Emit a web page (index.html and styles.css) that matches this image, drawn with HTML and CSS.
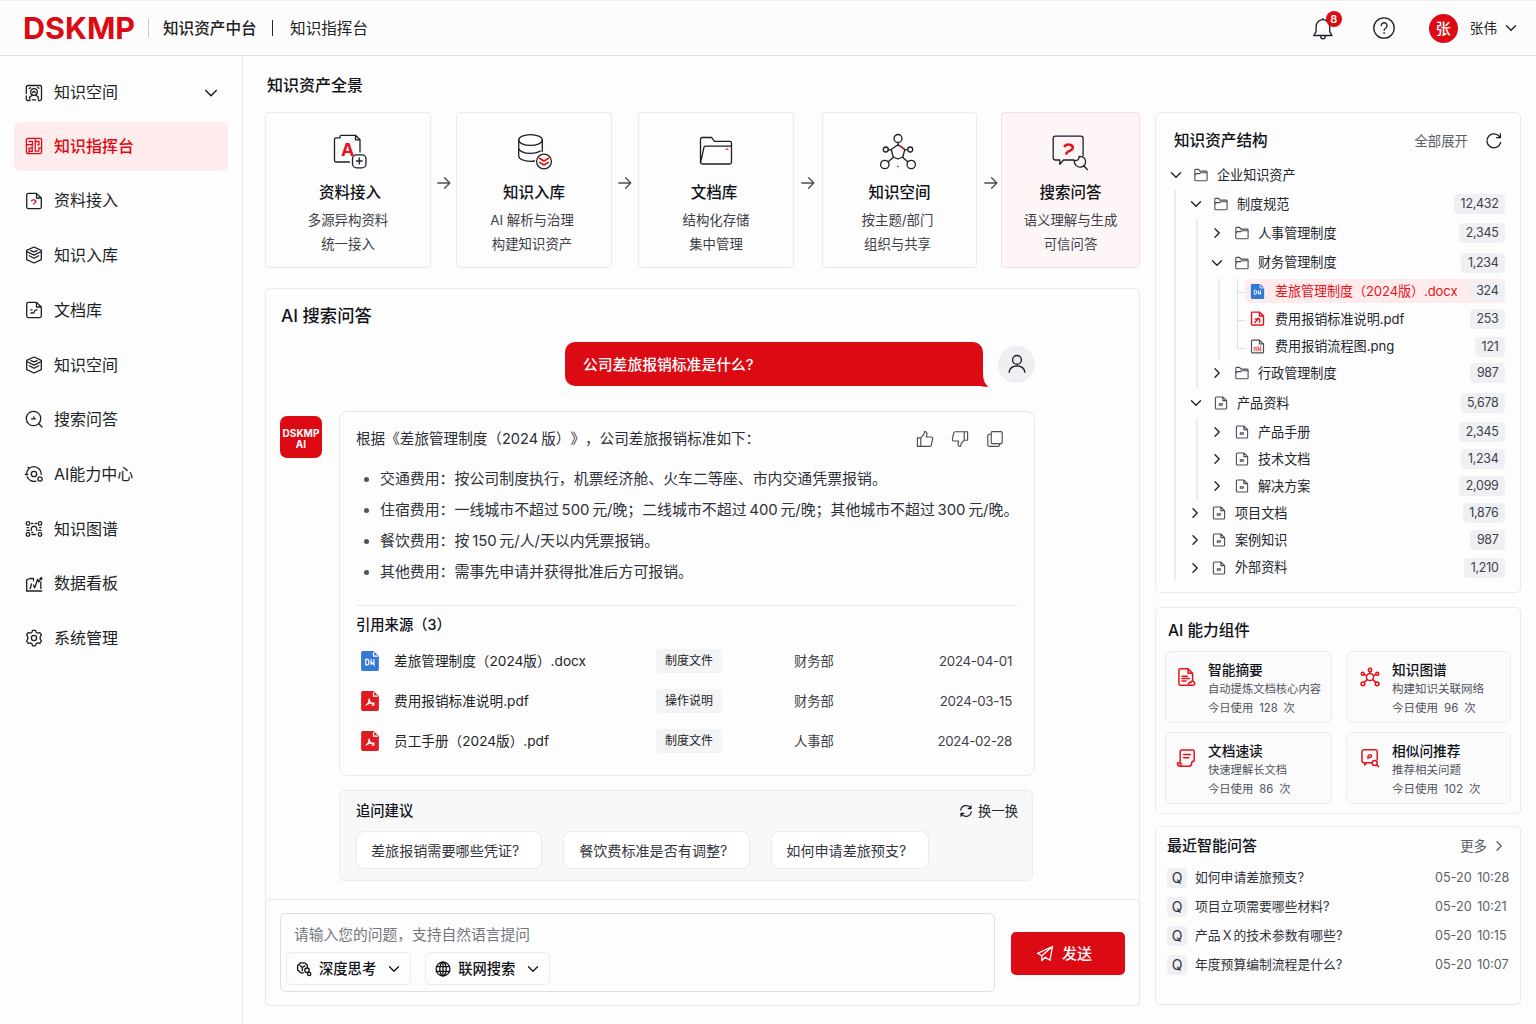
FILE: index.html
```html
<!DOCTYPE html>
<html lang="zh-CN">
<head>
    <meta charset="UTF-8">
    <meta name="viewport" content="width=device-width, initial-scale=1.0">
    <title>DSKMP 知识指挥台</title>
    <link rel="stylesheet" href="styles.css">
</head>
<body>
    <!-- Icon sprite -->
    <svg class="sprite" aria-hidden="true">
        <symbol id="i-down" viewBox="0 0 12 12"><path d="M1.500 3.800 6 8.300l4.500-4.500"/></symbol>
        <symbol id="i-right" viewBox="0 0 12 12"><path d="M4 1.800 8.200 6 4 10.200"/></symbol>
        <symbol id="i-arrow" viewBox="0 0 14 14"><path d="M.8 7h12M7.600 1.800 12.800 7l-5.200 5.200"/></symbol>
        <symbol id="i-bell" viewBox="0 0 24 24"><path d="M2.800 19.500h18.200l-2.300-3.800V10.500a6.800 6.800 0 0 0-13.600 0v5.200zM12 3.600V2.400M9.700 20.500a2.300 2.300 0 0 0 4.600 0"/></symbol>
        <symbol id="i-help" viewBox="0 0 24 24"><circle cx="12" cy="12" r="10.200"/><path d="M9.200 9.600a2.900 2.900 0 1 1 4.300 2.600c-1 .6-1.400 1.100-1.400 2.200"/><path d="M12.100 16.600v.9"/></symbol>
        <symbol id="i-space" viewBox="0 0 20 20"><path d="M6 17.500H3.800A1.500 1.500 0 0 1 2.300 16v-3M2.300 10.500V4a1.500 1.500 0 0 1 1.500-1.500H16A1.500 1.500 0 0 1 17.500 4v12a1.500 1.500 0 0 1-1.500 1.500h-1.500M5 5.500l1.500-.8M15 5.300l-1.400-.8"/><circle cx="10" cy="9" r="3.300"/><path d="M8.500 12 5.500 14.200l.3 1.800M11.500 12l3 2.200-.3 1.800M8.300 16.800h3.400M8.600 9.500 10 8.200l1.400 1.300"/></symbol>
        <symbol id="i-command" viewBox="0 0 20 20"><rect x="2.400" y="2.400" width="15.200" height="15.200" rx="1.500"/><path d="M5 5.500h3.500v3.200H2.800M11.200 2.800v12.400M11.200 5.500h3.800v3.300h-1.400M5 17v-4.800h3.200v3.200H5.500M8.200 9v3M14.800 11.800v3.200M11.200 15.200h2.300M14.800 11.800h2.500"/></symbol>
        <symbol id="i-docask" viewBox="0 0 20 20"><path d="M12.500 2.400H4.200a1.500 1.500 0 0 0-1.500 1.500v12.200a1.500 1.500 0 0 0 1.500 1.500h11.600a1.500 1.500 0 0 0 1.500-1.500V7zM12.500 2.400V7h4.800"/><path class="red" d="M7.400 9.800c1.200-1.400 4.800-1 4.600.6-.1 1.200-1.600 1-2.200 2.600"/></symbol>
        <symbol id="i-doc" viewBox="0 0 20 20"><path d="M12.500 2.400H4.200a1.500 1.500 0 0 0-1.500 1.500v12.200a1.500 1.500 0 0 0 1.500 1.500h11.600a1.500 1.500 0 0 0 1.500-1.500V7zM12.500 2.400V7h4.800M6.800 9.800h1.400M11 10.400l2-.6M7 13h2.600l1-1.800"/></symbol>
        <symbol id="i-box" viewBox="0 0 20 20"><path d="M10 2 17.300 5.300v9.300L10 18l-7.300-3.400V5.300zM2.700 6.500 10 10.200l7.300-3.700M5.300 10.700 10 13.300l4.700-2.600M6.800 5.600 10 6.900l3.200-1.300"/></symbol>
        <symbol id="i-search" viewBox="0 0 20 20"><circle cx="9.500" cy="9.500" r="7.200"/><path d="m14.800 14.800 3.200 3.200M7.500 9.800h4M9.800 7.800v2"/></symbol>
        <symbol id="i-center" viewBox="0 0 20 20"><path d="M12 17.200a7.400 7.400 0 0 1-8.800-4.400M2.600 10.700A7.400 7.400 0 0 1 10 2.600a7.400 7.400 0 0 1 7.200 7.800M1.400 10.500h2.400M5.500 4.200 4 3.200"/><circle cx="10" cy="10" r="2.700"/><circle cx="16" cy="15" r="2.100"/></symbol>
        <symbol id="i-graph" viewBox="0 0 20 20"><circle cx="4" cy="4.500" r="1.800"/><circle cx="16" cy="4.500" r="1.800"/><circle cx="4" cy="15.500" r="1.800"/><circle cx="16" cy="15.500" r="1.800"/><path d="M7.500 11.300a2.800 2.800 0 1 1 5 0M7.500 4.500h1.300M11.200 4.500h1.300M3 8.600h1.500M3 11.300h2.500M14.500 11.300H17M15.600 8.600H17M8 15.500h3.500M7.800 13.300h1"/></symbol>
        <symbol id="i-chart" viewBox="0 0 20 20"><path d="M2.500 17h15.200M2.700 17V5.800l3-1.300h3.800v2.200M6 14.500c1-1 1-3 1.300-4.500M9.500 11l1.200 2.700 3-8.400 1.100 2.600 2.700-4.400M16.800 8v6.500M16 4.500l1.500-1 .3 1.800"/></symbol>
        <symbol id="i-gear" viewBox="0 0 20 20"><path d="M8.600 2.300h2.800l.7 2 1.600.9 2.100-.6 1.600 2.300-1.200 1.800v2.500l1.200 1.900-1.600 2.300-2.100-.5-1.600.9-.7 2H8.600l-.7-2-1.600-.9-2.100.5-1.600-2.300 1.200-1.900V8.700L2.600 6.900l1.600-2.300 2.100.6 1.600-.9z"/><circle cx="10" cy="10" r="2.600"/></symbol>
        <symbol id="i-folder" viewBox="0 0 14 14"><path d="M.8 11.800V2.200a.8.800 0 0 1 .8-.8h3l1.300 1.700h6.400a.8.800 0 0 1 .8.800v8a.8.800 0 0 1-.8.8H1.600a.8.800 0 0 1-.8-.9zM.8 7.800l1.300-2.200h3.600l.8-.8h6.500"/></symbol>
        <symbol id="i-file" viewBox="0 0 14 14"><path d="M8.800 1H2.400a1 1 0 0 0-1 1v10a1 1 0 0 0 1 1h9.200a1 1 0 0 0 1-1V4.600zM8.800 1v3.600h3.800M5.300 9.300V7.800h3.200L8 9.200H5.300"/></symbol>
        <symbol id="i-word" viewBox="0 0 16 18"><path class="blue" d="M1.500 0h9.700L16 4.800v11.700a1.500 1.500 0 0 1-1.500 1.500h-13A1.500 1.500 0 0 1 0 16.500v-15A1.500 1.500 0 0 1 1.500 0z"/><path class="white" d="M11.200.8v3.900h4M4.200 12.500v-5h1.600c1.600 0 1.600 5 0 5zM9 12.500v-5M9 9.500l2.500 3v-5"/></symbol>
        <symbol id="i-pdf" viewBox="0 0 16 18"><path class="pdf" d="M1.500 0h9.700L16 4.800v11.700a1.500 1.500 0 0 1-1.500 1.500h-13A1.500 1.500 0 0 1 0 16.500v-15A1.500 1.500 0 0 1 1.500 0z"/><path class="white" d="M11.200.8v3.900h4M4.200 13c1.600-.8 3-3 3-6.200 0 2.400 1.600 4.400 4.200 4.600-2.200-.8-3.800-.4-5.400.2M9.400 12.800h2v-2.400"/></symbol>
        <symbol id="i-rfile" viewBox="0 0 14 14"><path d="M8.800 1H2.200a.8.800 0 0 0-.8.8v10.400a.8.800 0 0 0 .8.800h9.600a.8.800 0 0 0 .8-.8V4.600zM8.800 1v3.600h3.800M4.600 10.800l3.400-4M5 7.500h4M9 10.500V8.200"/></symbol>
        <symbol id="i-img" viewBox="0 0 14 14"><path class="dark" d="M8.800 1H2.200a.8.800 0 0 0-.8.8v10.400a.8.800 0 0 0 .8.800h9.600a.8.800 0 0 0 .8-.8V4.600zM8.800 1v3.600h3.800"/><path d="M4 11V8h1.800v3M7.500 11V6.500M7.500 8l2.500 3V6.500"/></symbol>
        <symbol id="i-refresh" viewBox="0 0 18 18"><path d="M15.700 10.400A7 7 0 1 1 14.900 5.200M15.400 1.800v3.900h-3.900"/></symbol>
        <symbol id="i-swap" viewBox="0 0 14 14"><path d="M1.800 6A5.300 5.300 0 0 1 11.600 4.200M12.200 8a5.300 5.300 0 0 1-9.800 1.800M12 1.800v2.800H9.200M2 12.200V9.400h2.800"/></symbol>
        <symbol id="i-up" viewBox="0 0 18 18"><path d="M1.400 7.800h3.400v8.500H1.400zM4.800 7.900l2.900-3.300.8-3c1.700-.3 2.600.9 2.400 2.500l-.5 2.900h4.900c.9 0 1.500.7 1.300 1.600l-1.300 6.500c-.2.700-.7 1.200-1.500 1.200H4.800"/></symbol>
        <symbol id="i-copy" viewBox="0 0 18 18"><rect x="5.200" y="1.600" width="11" height="12" rx="1.200"/><path d="M5.200 4.200H3a1.200 1.200 0 0 0-1.200 1.200v9.700a1.200 1.200 0 0 0 1.200 1.200h9.300a1.200 1.200 0 0 0 1.200-1.200v-1.500"/></symbol>
        <symbol id="i-user" viewBox="0 0 24 24"><circle cx="12" cy="7.500" r="4.800"/><path d="M3.400 21c.6-4.800 4-6.800 8.600-6.800s8 2 8.600 6.800"/></symbol>
        <symbol id="i-send" viewBox="0 0 18 18"><path d="M16.500 1.500 1.500 8.300l4.300 2.400zM16.500 1.500l-2.600 13.800-4.800-3M5.800 10.700v5l3.300-3.400"/></symbol>
        <symbol id="i-globe" viewBox="0 0 16 16"><circle cx="8" cy="8" r="6.900"/><ellipse cx="8" cy="8" rx="3.200" ry="6.900"/><path d="M8 1.100v13.800M1.400 5.600h13.200M1.400 10.400h13.200"/></symbol>
        <symbol id="i-think" viewBox="0 0 16 16"><path d="M7.600 11.800H4.800L1.600 9V4.600l3-2.800h4l2.800 2.500v2M4 4.500l2.300 2v3M6.300 6.500l2.500-1.800"/><circle cx="11" cy="9.200" r="2.200"/><circle cx="13.200" cy="13" r="1.700"/></symbol>
        <symbol id="i-sum" viewBox="0 0 20 20"><path d="M12 1.800H4.400a1.500 1.500 0 0 0-1.500 1.500v13.400a1.500 1.500 0 0 0 1.500 1.500h7.200M12 1.800l4.600 4.400v7M12 1.800v4.400h4.600M6 9.200h5.500M6 11.500h7.500M6 14h4"/><path d="M12.500 18.200h4.700a1.500 1.500 0 0 0 .8-2.800c0-1.700-2.700-1.900-3 0-2-.3-3.200 1.700-2.500 2.800z"/></symbol>
        <symbol id="i-net" viewBox="0 0 20 20"><circle cx="10" cy="10" r="3.600"/><circle cx="10" cy="2.900" r="1.700"/><circle cx="2.700" cy="6.800" r="1.500"/><circle cx="17.300" cy="6.800" r="1.500"/><circle cx="2.900" cy="16.800" r="1.900"/><circle cx="17.100" cy="16.800" r="1.900"/><path d="M10 4.600v1.800M4.200 7.500l2.400 1.200M15.800 7.500l-2.400 1.200M4.200 15.400l3.100-2.800M15.800 15.400l-3.100-2.800"/></symbol>
        <symbol id="i-read" viewBox="0 0 20 20"><path d="M4.200 12.800V3.500a1.500 1.500 0 0 1 1.500-1.500h11a1.500 1.500 0 0 1 1.500 1.500v9.600c-1.800 0-2.600.8-2.600 2.400s-1 2.700-2.400 2.700H4.400c-1.800 0-3-1.200-3-3.200h2.800c.8 0 1 .8.600 1.900M4.200 12.800v2.200M7.500 6.500h7M7.500 9.800h5.500"/></symbol>
        <symbol id="i-ask" viewBox="0 0 20 20"><path d="M6.500 14.700 4.800 17v-2.300H4a2 2 0 0 1-2-2v-9a2 2 0 0 1 2-2h11.200a2 2 0 0 1 2 2v8M6.500 14.700h5"/><path d="M8 10.600c-.3-2 .3-4 2-3.800 2.300.2 1.800 3-.6 2.600"/><circle cx="14.700" cy="15" r="2.500"/><path d="m16.600 16.800 2 1.800"/></symbol>
        <symbol id="s-import" viewBox="0 0 38 38"><path d="M9 4.800V3.500a1.200 1.200 0 0 1 1.200-1.200h14.300l4.500 4.500v12.200M24.500 2.300v4.500H29M9 4.800H5.200A1.700 1.700 0 0 0 3.500 6.500v20.800A1.700 1.700 0 0 0 5.200 29h13.300"/><rect x="21.500" y="21.800" width="13.500" height="13" rx="4"/><path d="M28.200 25v6M25.500 28h5.600"/></symbol>
        <symbol id="s-db" viewBox="0 0 38 38"><ellipse cx="15.500" cy="7" rx="11.800" ry="5.400"/><path d="M3.700 7v16c0 3 5.300 5.300 11.800 5.300 1.400 0 2.800-.1 4-.3M27.300 7v11.500M3.700 15c0 3 5.300 5.400 11.800 5.400 4 0 7.500-.9 9.800-2.300"/><circle cx="29" cy="28.500" r="7.400"/><path class="red thick" d="m24.800 25.500 4.200 2.500 4.200-2.500M24.800 29.500 29 32l4.200-2.500"/></symbol>
        <symbol id="s-folder" viewBox="0 0 38 38"><path d="M3.500 30V6.200A1.700 1.700 0 0 1 5.200 4.500h9.500l2.600 3.800h15.500a1.700 1.700 0 0 1 1.700 1.700v19.300a1.700 1.700 0 0 1-1.700 1.700H5.200c-1 0-1.700-.8-1.500-2L7 14.200a1.500 1.500 0 0 1 1.400-1.100h25.800"/><path class="red" d="M29.300 16.200h1.500"/></symbol>
        <symbol id="s-net" viewBox="0 0 38 38"><path d="m19 11.800 6.800 4.700-2 7.500-4.800 2-4.800-2-2-7.500z"/><circle cx="19" cy="5.500" r="4"/><circle cx="6.800" cy="16.500" r="2.500"/><circle cx="31.200" cy="16.500" r="2.500"/><circle cx="5.800" cy="31.500" r="4.200"/><circle cx="32.200" cy="31.500" r="4.200"/><path d="M19 9.500v2.300M9.300 16.800h2.900M28.700 16.800h-2.900M14.500 24.200l-5.300 4.600M23.500 24.200l5.300 4.600"/><path class="red" d="m22 13.200 3.400 2.800M18.700 33.500h.6"/></symbol>
        <symbol id="s-ask" viewBox="0 0 38 38"><path d="M24 27h-10.500l-3.700 4.200V27H5.500a2.300 2.300 0 0 1-2.300-2.300V5.500a2.300 2.300 0 0 1 2.300-2.300h25.300a2.300 2.300 0 0 1 2.300 2.300v17"/><path d="M29 23.300c.5 3-1.500 4.800-5 4.200.3 4.500 3.500 7 7 6.500 3-.5 4.800-3 4.500-6-.2-2.500-2.500-4.700-6.500-4.700zM33.500 32.500l3.800 4"/><path class="red heavy" d="M14.800 13c2.500-2.500 8.200-1.500 8 1.800-.2 3.200-4.200 2.200-6.500 5.700"/></symbol>
    </svg>

    <div class="app">
        <header class="header">
            <div class="logo">DSKMP</div>
            <span class="sep light"></span>
            <span class="product">知识资产中台</span>
            <span class="sep"></span>
            <span class="crumb">知识指挥台</span>
            <div class="header-right">
                <div class="bell"><svg class="icon i24"><use href="#i-bell"/></svg><span class="bell-count">8</span></div>
                <svg class="icon i24 help"><use href="#i-help"/></svg>
                <span class="avatar">张</span>
                <span class="username">张伟</span>
                <svg class="icon i12"><use href="#i-down"/></svg>
            </div>
        </header>

        <div class="body">
            <nav class="sidebar">
                <a class="nav-item first"><svg class="icon i20"><use href="#i-space"/></svg>知识空间<svg class="icon i14 nav-arrow"><use href="#i-down"/></svg></a>
                <a class="nav-item active"><svg class="icon i20"><use href="#i-command"/></svg>知识指挥台</a>
                <a class="nav-item"><svg class="icon i20"><use href="#i-docask"/></svg>资料接入</a>
                <a class="nav-item"><svg class="icon i20"><use href="#i-box"/></svg>知识入库</a>
                <a class="nav-item"><svg class="icon i20"><use href="#i-doc"/></svg>文档库</a>
                <a class="nav-item"><svg class="icon i20"><use href="#i-box"/></svg>知识空间</a>
                <a class="nav-item"><svg class="icon i20"><use href="#i-search"/></svg>搜索问答</a>
                <a class="nav-item"><svg class="icon i20"><use href="#i-center"/></svg>AI能力中心</a>
                <a class="nav-item"><svg class="icon i20"><use href="#i-graph"/></svg>知识图谱</a>
                <a class="nav-item"><svg class="icon i20"><use href="#i-chart"/></svg>数据看板</a>
                <a class="nav-item"><svg class="icon i20"><use href="#i-gear"/></svg>系统管理</a>
            </nav>

            <main class="main">
                <h2 class="page-title">知识资产全景</h2>

                <!-- Pipeline -->
                <section class="flow">
                    <div class="step import">
                        <div class="step-icon"><svg class="icon i38"><use href="#s-import"/></svg><b class="step-letter">A</b></div>
                        <h3>资料接入</h3>
                        <p>多源异构资料<br>统一接入</p>
                    </div>
                    <svg class="icon i14 flow-arrow"><use href="#i-arrow"/></svg>
                    <div class="step store">
                        <div class="step-icon"><svg class="icon i38"><use href="#s-db"/></svg></div>
                        <h3>知识入库</h3>
                        <p>AI 解析与治理<br>构建知识资产</p>
                    </div>
                    <svg class="icon i14 flow-arrow"><use href="#i-arrow"/></svg>
                    <div class="step docs">
                        <div class="step-icon"><svg class="icon i38"><use href="#s-folder"/></svg></div>
                        <h3>文档库</h3>
                        <p>结构化存储<br>集中管理</p>
                    </div>
                    <svg class="icon i14 flow-arrow"><use href="#i-arrow"/></svg>
                    <div class="step space">
                        <div class="step-icon"><svg class="icon i38"><use href="#s-net"/></svg></div>
                        <h3>知识空间</h3>
                        <p>按主题/部门<br>组织与共享</p>
                    </div>
                    <svg class="icon i14 flow-arrow last"><use href="#i-arrow"/></svg>
                    <div class="step current">
                        <div class="step-icon"><svg class="icon i38"><use href="#s-ask"/></svg></div>
                        <h3>搜索问答</h3>
                        <p>语义理解与生成<br>可信问答</p>
                    </div>
                </section>

                <!-- Chat -->
                <section class="chat">
                    <h2 class="chat-title">AI 搜索问答</h2>
                    <div class="question">
                        <div class="bubble">公司差旅报销标准是什么?<svg class="tail" viewBox="0 0 16 16"><path d="M0 0h10c0 8 1 12.500 5.800 15.800-4 .2-7-.2-9-.8H0z"/></svg></div>
                        <div class="user-avatar"><svg class="icon i24"><use href="#i-user"/></svg></div>
                    </div>

                    <div class="reply">
                        <div class="bot-logo">DSKMP<br>AI</div>
                        <div class="answer">
                            <div class="lead">
                                <span>根据《差旅管理制度（2024 版）》，公司差旅报销标准如下：</span>
                                <div class="actions">
                                    <svg class="icon i18"><use href="#i-up"/></svg>
                                    <svg class="icon i18 flip"><use href="#i-up"/></svg>
                                    <svg class="icon i18"><use href="#i-copy"/></svg>
                                </div>
                            </div>
                            <ul class="points">
                                <li>交通费用：按公司制度执行，机票经济舱、火车二等座、市内交通凭票报销。</li>
                                <li>住宿费用：一线城市不超过 500 元/晚；二线城市不超过 400 元/晚；其他城市不超过 300 元/晚。</li>
                                <li>餐饮费用：按 150 元/人/天以内凭票报销。</li>
                                <li>其他费用：需事先申请并获得批准后方可报销。</li>
                            </ul>
                            <div class="sources">
                                <h4>引用来源（3）</h4>
                                <div class="source">
                                    <svg class="doc-icon"><use href="#i-word"/></svg>
                                    <span class="source-name">差旅管理制度（2024版）.docx</span>
                                    <span class="tag">制度文件</span>
                                    <span class="dept">财务部</span>
                                    <span class="date">2024-04-01</span>
                                </div>
                                <div class="source">
                                    <svg class="doc-icon"><use href="#i-pdf"/></svg>
                                    <span class="source-name">费用报销标准说明.pdf</span>
                                    <span class="tag">操作说明</span>
                                    <span class="dept">财务部</span>
                                    <span class="date">2024-03-15</span>
                                </div>
                                <div class="source">
                                    <svg class="doc-icon"><use href="#i-pdf"/></svg>
                                    <span class="source-name">员工手册（2024版）.pdf</span>
                                    <span class="tag">制度文件</span>
                                    <span class="dept">人事部</span>
                                    <span class="date">2024-02-28</span>
                                </div>
                            </div>
                        </div>
                    </div>

                    <div class="followup">
                        <div class="followup-head">
                            <h4>追问建议</h4>
                            <span class="swap"><svg class="icon i14"><use href="#i-swap"/></svg>换一换</span>
                        </div>
                        <div class="chips">
                            <span class="chip">差旅报销需要哪些凭证?</span>
                            <span class="chip wide">餐饮费标准是否有调整?</span>
                            <span class="chip">如何申请差旅预支?</span>
                        </div>
                    </div>

                    <div class="composer">
                        <div class="input-box">
                            <div class="placeholder">请输入您的问题，支持自然语言提问</div>
                            <div class="modes">
                                <button class="mode"><svg class="icon i16"><use href="#i-think"/></svg>深度思考<svg class="icon i12"><use href="#i-down"/></svg></button>
                                <button class="mode"><svg class="icon i16"><use href="#i-globe"/></svg>联网搜索<svg class="icon i12"><use href="#i-down"/></svg></button>
                            </div>
                        </div>
                        <button class="send"><svg class="icon i18"><use href="#i-send"/></svg>发送</button>
                    </div>
                </section>
            </main>

            <aside class="aside">
                <!-- Asset tree -->
                <section class="panel tree-panel">
                    <div class="panel-head">
                        <h3>知识资产结构</h3>
                        <span class="expand">全部展开</span>
                        <svg class="icon i18"><use href="#i-refresh"/></svg>
                    </div>
                    <div class="tree">
                        <div class="row"><svg class="icon i12"><use href="#i-down"/></svg><svg class="icon i14 kind"><use href="#i-folder"/></svg>企业知识资产</div>
                        <div class="level l1">
                            <div class="row"><svg class="icon i12"><use href="#i-down"/></svg><svg class="icon i14 kind"><use href="#i-folder"/></svg>制度规范<span class="count">12,432</span></div>
                            <div class="level l2">
                                <div class="row"><svg class="icon i12"><use href="#i-right"/></svg><svg class="icon i14 kind"><use href="#i-folder"/></svg>人事管理制度<span class="count">2,345</span></div>
                                <div class="row"><svg class="icon i12"><use href="#i-down"/></svg><svg class="icon i14 kind"><use href="#i-folder"/></svg>财务管理制度<span class="count">1,234</span></div>
                                <div class="level l3">
                                    <div class="leaf selected"><svg class="doc-icon small"><use href="#i-word"/></svg>差旅管理制度（2024版）.docx<span class="count">324</span></div>
                                    <div class="leaf"><svg class="icon i16 red-icon"><use href="#i-rfile"/></svg>费用报销标准说明.pdf<span class="count">253</span></div>
                                    <div class="leaf"><svg class="icon i16 img-icon"><use href="#i-img"/></svg>费用报销流程图.png<span class="count">121</span></div>
                                </div>
                                <div class="row mid"><svg class="icon i12"><use href="#i-right"/></svg><svg class="icon i14 kind"><use href="#i-folder"/></svg>行政管理制度<span class="count">987</span></div>
                            </div>
                            <div class="row tall"><svg class="icon i12"><use href="#i-down"/></svg><svg class="icon i14 kind"><use href="#i-file"/></svg>产品资料<span class="count">5,678</span></div>
                            <div class="level l2 tight">
                                <div class="row"><svg class="icon i12"><use href="#i-right"/></svg><svg class="icon i14 kind"><use href="#i-file"/></svg>产品手册<span class="count">2,345</span></div>
                                <div class="row"><svg class="icon i12"><use href="#i-right"/></svg><svg class="icon i14 kind"><use href="#i-file"/></svg>技术文档<span class="count">1,234</span></div>
                                <div class="row"><svg class="icon i12"><use href="#i-right"/></svg><svg class="icon i14 kind"><use href="#i-file"/></svg>解决方案<span class="count">2,099</span></div>
                            </div>
                            <div class="row short"><svg class="icon i12"><use href="#i-right"/></svg><svg class="icon i14 kind"><use href="#i-file"/></svg>项目文档<span class="count">1,876</span></div>
                            <div class="row short"><svg class="icon i12"><use href="#i-right"/></svg><svg class="icon i14 kind"><use href="#i-file"/></svg>案例知识<span class="count">987</span></div>
                            <div class="row short"><svg class="icon i12"><use href="#i-right"/></svg><svg class="icon i14 kind"><use href="#i-file"/></svg>外部资料<span class="count">1,210</span></div>
                        </div>
                    </div>
                </section>

                <!-- AI tools -->
                <section class="panel tools-panel">
                    <h3>AI 能力组件</h3>
                    <div class="tools">
                        <div class="tool"><svg class="icon i20"><use href="#i-sum"/></svg><div><h4>智能摘要</h4><p>自动提炼文档核心内容</p><p>今日使用 128 次</p></div></div>
                        <div class="tool"><svg class="icon i20"><use href="#i-net"/></svg><div><h4>知识图谱</h4><p>构建知识关联网络</p><p>今日使用 96 次</p></div></div>
                        <div class="tool"><svg class="icon i20"><use href="#i-read"/></svg><div><h4>文档速读</h4><p>快速理解长文档</p><p>今日使用 86 次</p></div></div>
                        <div class="tool"><svg class="icon i20"><use href="#i-ask"/></svg><div><h4>相似问推荐</h4><p>推荐相关问题</p><p>今日使用 102 次</p></div></div>
                    </div>
                </section>

                <!-- Recent questions -->
                <section class="panel recent-panel">
                    <div class="recent-head"><h3>最近智能问答</h3><span class="more">更多<svg class="icon i12"><use href="#i-right"/></svg></span></div>
                    <div class="recent"><span class="q">Q</span>如何申请差旅预支?<time>05-20 10:28</time></div>
                    <div class="recent"><span class="q">Q</span>项目立项需要哪些材料?<time>05-20 10:21</time></div>
                    <div class="recent"><span class="q">Q</span>产品 X 的技术参数有哪些?<time>05-20 10:15</time></div>
                    <div class="recent"><span class="q">Q</span>年度预算编制流程是什么?<time>05-20 10:07</time></div>
                </section>
            </aside>
        </div>
    </div>
</body>
</html>
```
FILE: styles.css
```css
* {
    box-sizing: border-box;
}
body {
    margin: 0;
    font-family: Inter, "Noto Sans CJK SC", sans-serif;
    font-size: 14px;
    line-height: 1.4;
    text-spacing-trim: space-all;
    color: #1c1f26;
    background-color: #fdfdfd;
}
h2, h3, h4, p, ul {
    margin: 0;
    padding: 0;
}
h2, h3, h4 {
    font-weight: 500;
    color: #0f1218;
}
button {
    font-family: inherit;
    cursor: pointer;
}
.sprite {
    position: absolute;
    width: 0;
    height: 0;
}
.app {
    width: 1536px;
    height: 1024px;
    display: flex;
    flex-direction: column;
    overflow: hidden;
}

/* icons */
.icon {
    flex: none;
    fill: none;
    stroke: currentColor;
    stroke-width: 1.3;
    stroke-linecap: round;
    stroke-linejoin: round;
}
.i12 { width: 12px; height: 12px; }
.i14 { width: 14px; height: 14px; }
.i16 { width: 16px; height: 16px; }
.i18 { width: 18px; height: 18px; }
.i20 { width: 20px; height: 20px; }
.i24 { width: 24px; height: 24px; }
.i38 { width: 38px; height: 38px; }
.red { stroke: #e5121a; }
.dark { stroke: #4a4d55; }
.thick { stroke-width: 1.8; }
.heavy { stroke-width: 2.6; }
.doc-icon {
    width: 18px;
    height: 20px;
    fill: none;
}
.blue { fill: #3578d4; }
.pdf { fill: #dd1c24; }
.white { stroke: #fff; stroke-width: 1.1; }

/* header */
.header {
    height: 56px;
    flex: none;
    display: flex;
    align-items: center;
    padding: 0 19px 0 23px;
    border-top: 1px solid #ededf0;
    border-bottom: 1px solid #dfe0e3;
    background: #fdfcfc;
}
.logo {
    padding-top: 1px;
    font-size: 30.500px;
    font-weight: 700;
    color: #dc0a12;
    width: 125px;
}
.sep {
    width: 1.5px;
    height: 16px;
    background: #25282f;
    margin: 0 17px 0 15px;
}
.sep.light {
    width: 1px;
    height: 18px;
    background: #c8cad0;
    margin: 0 14px 0 0;
}
.product, .crumb {
    padding-top: 2px;
    font-size: 15.6px;
}
.product {
    font-weight: 500;
}
.header-right {
    margin-left: auto;
    display: flex;
    align-items: center;
}
.bell {
    position: relative;
    height: 24px;
    margin-right: 37px;
}
.bell-count {
    position: absolute;
    left: 15px;
    top: -5px;
    width: 16px;
    height: 16px;
    border-radius: 50%;
    background: #dc0a12;
    color: #fff;
    font-size: 11px;
    font-weight: 600;
    line-height: 16px;
    text-align: center;
}
.help {
    margin-right: 33px;
}
.avatar {
    width: 29px;
    height: 29px;
    border-radius: 50%;
    background: #dc0a12;
    color: #fff;
    font-size: 15px;
    font-weight: 500;
    line-height: 29px;
    text-align: center;
}
.username {
    margin: 0 8px 0 12px;
    padding-top: 2px;
    font-size: 13.6px;
}

/* body */
.body {
    flex: 1;
    display: flex;
    min-height: 0;
}
.sidebar {
    width: 243px;
    flex: none;
    padding: 12px 14px;
    border-right: 1px solid #e8e9ec;
}
.nav-item {
    display: flex;
    align-items: center;
    height: 49px;
    margin-bottom: 5.700px;
    padding: 0 10px;
    gap: 10px;
    border-radius: 6px;
    font-size: 16px;
}
.nav-item.first {
    margin-bottom: 4.500px;
}
.nav-item.active {
    background: #feeced;
    color: #dc0a12;
    font-weight: 500;
}
.nav-arrow {
    margin-left: auto;
}
.main {
    width: 875px;
    margin-left: 22px;
    flex: none;
}
.page-title {
    margin: 17px 0 15px 2px;
    font-size: 16px;
    line-height: 24px;
}

/* pipeline */
.flow {
    display: grid;
    grid-template-columns: 166px 25px 156px 26px 156px 28px 155px 24px 139px;
    align-items: center;
    height: 156px;
}
.step {
    height: 156px;
    padding-top: 20px;
    border: 1px solid #e9eaed;
    border-radius: 4px;
    text-align: center;
}
.step.current {
    background: #fef6f6;
    border-color: #f9dcde;
}
.step-icon {
    position: relative;
    width: 38px;
    height: 38px;
    margin: 0 auto;
}
.step-letter {
    position: absolute;
    left: 10px;
    top: 6px;
    font-size: 18px;
    line-height: 22px;
    color: #e5121a;
}
.step h3 {
    margin-top: 10px;
    font-size: 15.500px;
    line-height: 24px;
}
.step p {
    margin-top: 3px;
    font-size: 13.400px;
    line-height: 24px;
    color: #3d4048;
}
.import .step-icon, .import h3 {
    transform: translateX(2px);
}
.store p, .docs h3, .space .step-icon, .space p, .current .step-icon {
    transform: translateX(-2px);
}
.flow-arrow {
    justify-self: center;
    margin-top: -14px;
    color: #4a4d55;
}
.flow-arrow.last {
    margin-left: 3px;
}

/* chat */
.chat {
    display: flex;
    flex-direction: column;
    height: 718px;
    margin-top: 20px;
    border: 1px solid #e9eaed;
    border-radius: 5px;
}
.chat-title {
    margin: 15px 0 0 15px;
    font-size: 17.300px;
    line-height: 24px;
}
.question {
    display: flex;
    align-items: center;
    margin: 14px 0 0 299px;
}
.bubble {
    position: relative;
    width: 418px;
    height: 44px;
    padding-left: 18px;
    border-radius: 10px 10px 0 10px;
    background: #dc0a12;
    color: #fff;
    font-size: 14.800px;
    font-weight: 500;
    line-height: 46px;
}
.tail {
    position: absolute;
    right: -6px;
    bottom: -1px;
    width: 16px;
    height: 16px;
    fill: #dc0a12;
}
.user-avatar {
    display: flex;
    align-items: center;
    justify-content: center;
    width: 37px;
    height: 37px;
    margin-left: 15px;
    border-radius: 50%;
    background: #eeeff2;
}
.user-avatar .icon {
    width: 22px;
    height: 22px;
    stroke-width: 1.5;
}
.reply {
    display: flex;
    margin: 25px 0 0 14px;
}
.bot-logo {
    width: 42px;
    height: 42px;
    margin: 5px 17px 0 0;
    padding-top: 12px;
    border-radius: 7px;
    background: #dc0a12;
    color: #fff;
    font-size: 10px;
    font-weight: 700;
    line-height: 10.500px;
    text-align: center;
}
.answer {
    width: 696px;
    height: 365px;
    padding: 12px 17px 0 16px;
    border: 1px solid #e9eaed;
    border-radius: 8px;
}
.lead {
    display: flex;
    align-items: center;
    justify-content: space-between;
    height: 30px;
    font-size: 14.600px;
    color: #2b2e36;
    word-spacing: -1px;
}
.lead span {
    padding-top: 1px;
}
.actions {
    display: flex;
    gap: 17px;
    margin-right: 13px;
    color: #4a4d55;
}
.actions .icon {
    stroke-width: 1.15;
}
.flip {
    transform: rotate(180deg);
}
.points {
    margin-top: 9px;
    list-style: none;
}
.points li {
    display: flex;
    align-items: center;
    height: 31px;
    padding-top: 1px;
    font-size: 14.920px;
    color: #2f323a;
    white-space: nowrap;
    word-spacing: -1.500px;
}
.points li::before {
    content: "";
    flex: none;
    width: 5px;
    height: 5px;
    margin: 0 11px 0 8px;
    border-radius: 50%;
    background: #50535b;
}
.sources {
    margin-top: 18px;
    border-top: 1px solid #e6e7ea;
}
.sources h4 {
    margin: 9px 0 6px;
    font-size: 14.300px;
    line-height: 20px;
}
.source {
    display: grid;
    grid-template-columns: 33px 262px 138px 1fr auto;
    align-items: center;
    height: 40px;
    padding: 0 5px;
    font-size: 13.650px;
}
.source-name {
    padding-top: 2px;
}
.tag {
    justify-self: start;
    padding: 0 9px;
    height: 24px;
    border-radius: 4px;
    background: #f3f4f6;
    font-size: 12px;
    line-height: 24px;
}
.dept, .date {
    font-size: 13.300px;
    color: #3d4048;
}
.date {
    letter-spacing: -0.3px;
}
.followup {
    width: 694px;
    height: 91px;
    margin: 14px 0 0 73px;
    padding: 10px 14px 0 16px;
    border: 1px solid #ebecef;
    border-radius: 6px;
    background: #f7f8fa;
}
.followup-head {
    display: flex;
    justify-content: space-between;
    align-items: center;
    height: 20px;
}
.followup-head h4 {
    font-size: 14.300px;
}
.swap {
    display: flex;
    align-items: center;
    gap: 5px;
    font-size: 13.300px;
}
.chips {
    display: flex;
    gap: 21px;
    margin-top: 10px;
}
.chip {
    height: 38px;
    padding: 0 22px 0 14px;
    border: 1px solid #e9eaed;
    border-radius: 8px;
    background: #fff;
    font-size: 14.100px;
    line-height: 38px;
    color: #33363e;
}
.chip.wide {
    padding: 0 22px 0 15px;
}
.composer {
    display: flex;
    align-items: center;
    height: 107px;
    margin: 18px -1px -1px;
    padding: 0 14px;
    border: 1px solid #e6e7ea;
    border-radius: 5px;
}
.input-box {
    width: 716px;
    height: 79px;
    padding: 9px 5px 0;
    border: 1px solid #dedfe3;
    border-radius: 6px;
}
.placeholder {
    padding-left: 8px;
    font-size: 14.750px;
    line-height: 24px;
    color: #74777f;
}
.modes {
    display: flex;
    gap: 14px;
    margin-top: 5px;
}
.mode {
    display: flex;
    align-items: center;
    height: 33px;
    padding: 0 10px 0 9px;
    border: 1px solid #ececef;
    border-radius: 5px;
    background: none;
    color: #0f1218;
    font-size: 14.300px;
    font-weight: 500;
    line-height: 20px;
}
.mode .i16 {
    margin-right: 7px;
}
.mode .i12 {
    margin-left: 12px;
}
.send {
    display: flex;
    align-items: center;
    justify-content: center;
    gap: 8px;
    width: 114px;
    height: 43px;
    margin: 1px 0 0 16px;
    padding: 1px 14px 0 6px;
    border: none;
    border-radius: 5px;
    background: #dc0a12;
    color: #fff;
    font-size: 15px;
    font-weight: 500;
    line-height: 20px;
}

/* right column */
.aside {
    width: 366px;
    margin-left: 15px;
    padding-top: 56px;
}
.panel {
    border: 1px solid #e9eaed;
    border-radius: 5px;
}
.panel h3 {
    font-size: 15.600px;
    line-height: 24px;
}
.tree-panel {
    height: 481px;
    padding: 16px 15px 0 14px;
}
.panel-head {
    display: flex;
    align-items: center;
    height: 24px;
    padding: 0 2px 0 4px;
}
.expand {
    margin: 0 17px 0 auto;
    font-size: 13.400px;
    color: #5b5e66;
}
.tree {
    margin-top: 7.500px;
    font-size: 13.100px;
    color: #22252c;
}
.row {
    display: flex;
    align-items: center;
    height: 29.200px;
}
.row .i12 {
    stroke-width: 1.4;
}
.kind {
    margin: 0 9px 0 12px;
    color: #4a4d55;
    stroke-width: 1.1;
}
.row.mid { height: 29.500px; }
.row.tall { height: 30px; }
.row.short, .tight .row { height: 27.200px; }
.row.short .i12 { margin-left: -1px; }
.row.short .kind { margin-left: 11px; }
.level {
    border-left: 2px solid #ebecf0;
}
.l1 { margin-left: 4px; padding-left: 14px; }
.l2 { margin-left: 6px; padding-left: 13px; }
.l3 {
    margin-left: 7px;
    padding-left: 17px;
}
.leaf {
    position: relative;
    display: flex;
    align-items: center;
    height: 24px;
    margin: 2px 0 0 8px;
    padding-left: 5px;
    border-radius: 5px;
}
.leaf + .leaf {
    margin-top: 3.700px;
}
/* elbow connector in front of each file */
.leaf::before {
    content: "";
    position: absolute;
    left: -8px;
    top: -14px;
    width: 7px;
    height: 27px;
    border-left: 1px solid #dddee3;
    border-bottom: 1px solid #dddee3;
}
.leaf:first-child::before {
    top: 0;
    height: 13px;
}
.leaf.selected {
    background: #feeced;
    color: #e5121a;
    letter-spacing: -0.1px;
}
.leaf .icon, .leaf .doc-icon {
    width: 15px;
    height: 15px;
    margin-right: 10px;
}
.red-icon { color: #e5121a; }
.img-icon { color: #e8666b; stroke-width: 1.1; }
.count {
    margin-left: auto;
    height: 20px;
    padding: 0 6.500px;
    border-radius: 4px;
    background: #eff0f3;
    color: #3d4048;
    font-size: 12.400px;
    line-height: 20px;
    letter-spacing: -0.25px;
}
.tools-panel {
    height: 207px;
    margin-top: 14px;
    padding: 11px 9px 0;
}
.tools-panel h3 {
    padding-left: 3px;
}
.tools {
    display: grid;
    grid-template-columns: 167px 165px;
    gap: 9px 14px;
    margin-top: 8px;
}
.tool {
    display: flex;
    height: 72px;
    padding: 8px 0 0 11px;
    border: 1px solid #ebecef;
    border-radius: 6px;
    background: #fbfbfc;
}
.tool:nth-child(even) {
    padding-left: 14px;
}
.tool:nth-child(even) .icon {
    margin-right: 12px;
}
.tool .icon {
    margin: 7px 12px 0 -1px;
    color: #e5121a;
    stroke-width: 1.5;
}
.tool h4 {
    font-size: 13.700px;
    line-height: 20px;
}
.tool p {
    font-size: 11.300px;
    line-height: 18.500px;
    color: #50535b;
    white-space: nowrap;
    word-spacing: 2.800px;
}
.tool:nth-child(even) p {
    font-size: 11.500px;
}
.recent-panel {
    height: 179px;
    margin-top: 12px;
    padding: 7px 11px 0;
}
.recent-head {
    display: flex;
    align-items: center;
    justify-content: space-between;
    margin-bottom: 5px;
}
.recent-head h3 {
    font-size: 15px;
}
.more {
    display: flex;
    align-items: center;
    gap: 6px;
    padding-right: 4px;
    font-size: 13.400px;
    color: #5b5e66;
}
.recent {
    display: flex;
    align-items: center;
    height: 29px;
    font-size: 12.800px;
    color: #2f323a;
    word-spacing: -1.500px;
}
.q {
    width: 20px;
    height: 20px;
    margin-right: 8px;
    border-radius: 4px;
    background: #eff0f3;
    font-size: 14px;
    line-height: 20px;
    text-align: center;
}
.recent time {
    margin-left: auto;
    width: 74px;
    font-size: 12.600px;
    color: #5b5e66;
    white-space: nowrap;
    word-spacing: 2px;
}
```
